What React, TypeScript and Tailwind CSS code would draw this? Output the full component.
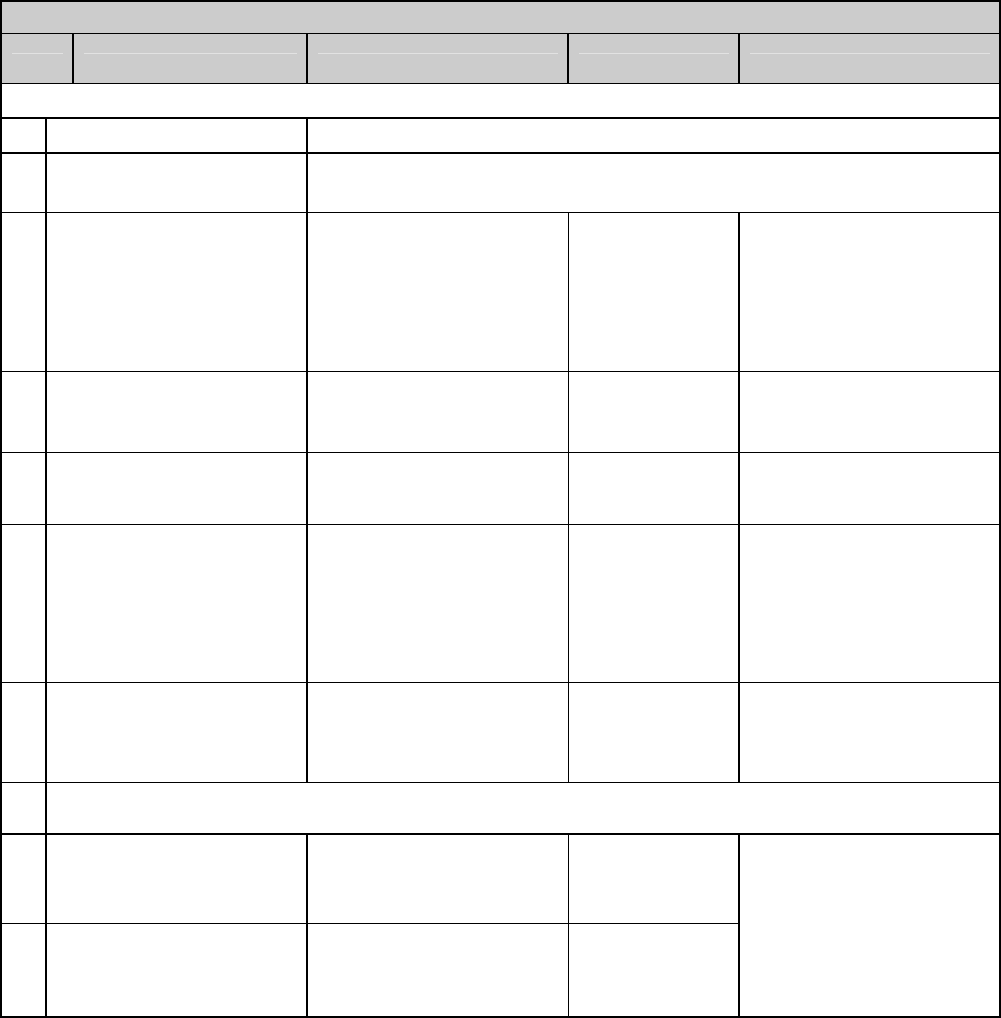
import React from "react";

const Line = ({ className = "" }: { className?: string }) => (
  <div className={`mt-[19px] ml-[10px] mr-[9px] h-px bg-[#e2e2e2] ${className}`} />
);

function BodyRow5({ h }: { h: string }) {
  return (
    <div className={`flex ${h} border-b border-black`}>
      <div className="w-[45px] shrink-0 border-r-2 border-black" />
      <div className="w-[261px] shrink-0 border-r-2 border-black" />
      <div className="w-[261px] shrink-0 border-r border-black" />
      <div className="w-[171px] shrink-0 border-r-2 border-black" />
      <div className="flex-1" />
    </div>
  );
}

export default function App() {
  return (
    <div className="w-[1001px] h-[1018px] bg-white">
      <div className="flex h-full w-full flex-col border-2 border-black">
        {/* title row */}
        <div className="h-[32px] shrink-0 border-b border-black bg-[#cccccc]" />
        {/* header row */}
        <div className="flex h-[50px] shrink-0 border-b border-black bg-[#cccccc]">
          <div className="w-[72px] shrink-0 border-r-2 border-black">
            <Line />
          </div>
          <div className="w-[234px] shrink-0 border-r-2 border-black">
            <Line />
          </div>
          <div className="w-[261px] shrink-0 border-r-2 border-black">
            <Line />
          </div>
          <div className="w-[171px] shrink-0 border-r-2 border-black">
            <Line />
          </div>
          <div className="flex-1">
            <Line />
          </div>
        </div>
        {/* row A */}
        <div className="h-[35px] shrink-0 border-b-2 border-black" />
        {/* row B */}
        <div className="flex h-[35px] shrink-0 border-b-2 border-black">
          <div className="w-[45px] shrink-0 border-r-2 border-black" />
          <div className="w-[261px] shrink-0 border-r-2 border-black" />
          <div className="flex-1" />
        </div>
        {/* row C */}
        <div className="flex h-[59px] shrink-0 border-b border-black">
          <div className="w-[45px] shrink-0 border-r-2 border-black" />
          <div className="w-[261px] shrink-0 border-r-2 border-black" />
          <div className="flex-1" />
        </div>
        <BodyRow5 h="h-[159px] shrink-0" />
        <BodyRow5 h="h-[81px] shrink-0" />
        <BodyRow5 h="h-[72px] shrink-0" />
        <BodyRow5 h="h-[158px] shrink-0" />
        <BodyRow5 h="h-[100px] shrink-0" />
        {/* row I */}
        <div className="flex h-[52px] shrink-0 border-b-2 border-black">
          <div className="w-[45px] shrink-0 border-r-2 border-black" />
          <div className="flex-1" />
        </div>
        {/* rows J + K */}
        <div className="flex flex-1">
          <div className="flex w-[738px] shrink-0 flex-col border-r-2 border-black">
            <div className="flex h-[89px] shrink-0 border-b border-black">
              <div className="w-[45px] shrink-0 border-r-2 border-black" />
              <div className="w-[261px] shrink-0 border-r-2 border-black" />
              <div className="w-[261px] shrink-0 border-r border-black" />
              <div className="flex-1" />
            </div>
            <div className="flex flex-1">
              <div className="w-[45px] shrink-0 border-r-2 border-black" />
              <div className="w-[261px] shrink-0 border-r-2 border-black" />
              <div className="w-[261px] shrink-0 border-r border-black" />
              <div className="flex-1" />
            </div>
          </div>
          <div className="flex-1" />
        </div>
      </div>
    </div>
  );
}
